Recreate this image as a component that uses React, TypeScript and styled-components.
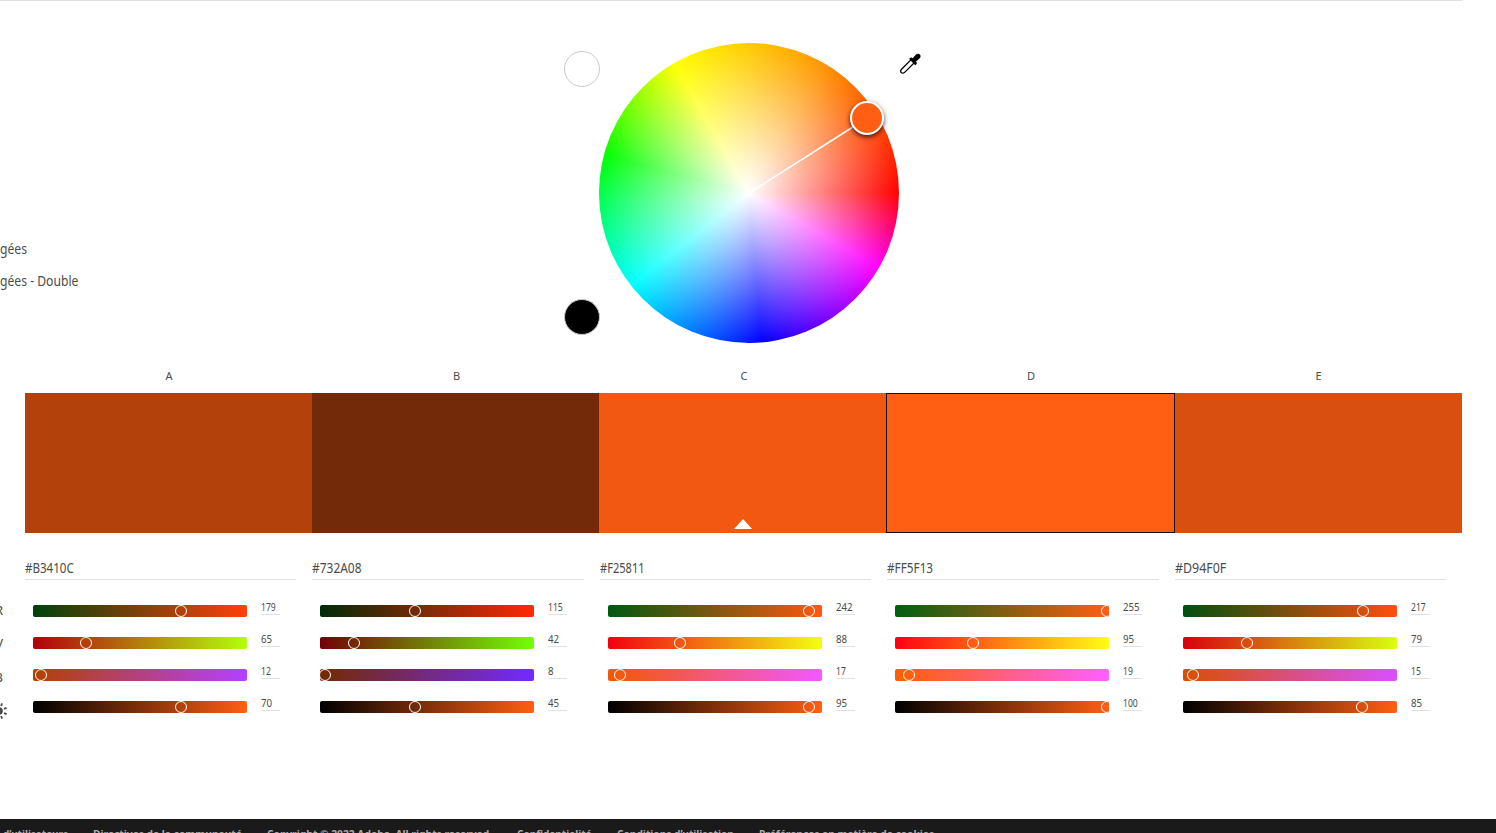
import React from "react";
import styled, { createGlobalStyle } from "styled-components";

const GlobalStyle = createGlobalStyle`
  * { box-sizing: border-box; }
  body {
    margin: 0;
    background: #fff;
    color: #4b4b4b;
    font-family: "Noto Sans", "Open Sans", sans-serif;
    overflow: hidden;
  }
`;

const Page = styled.div`
  display: flex;
  flex-direction: column;
  width: 1496px;
  height: 833px;
  overflow: hidden;
`;

/* Narrows a run of text horizontally, keeping its left edge in place. */
const Condensed = styled.span<{ $scale: number }>`
  display: inline-block;
  white-space: nowrap;
  transform: scaleX(${(p) => p.$scale});
  transform-origin: 0 50%;
`;

const Divider = styled.div`
  flex: none;
  width: 1462px;
  height: 1px;
  background: #e1e1e1;
`;

const Stage = styled.section`
  display: flex;
  flex: none;
  height: 364px;
`;

const HarmonyList = styled.ul`
  flex: none;
  width: 564px;
  margin: 0;
  padding: 232px 0 0;
  list-style: none;
`;

const HarmonyItem = styled.li`
  height: 32px;
  line-height: 32px;
  font-size: 13.5px;
`;

const Chips = styled.div`
  display: flex;
  flex-direction: column;
  justify-content: space-between;
  flex: none;
  width: 36px;
  height: 284px;
  margin: 50px -1px 0 0;
`;

const Chip = styled.div<{ $fill: string }>`
  width: 36px;
  height: 36px;
  border: 1px solid #c9c9c9;
  border-radius: 50%;
  background: ${(p) => p.$fill};
`;

const Wheel = styled.div`
  position: relative;
  flex: none;
  width: 300px;
  height: 300px;
  margin-top: 42px;
  border-radius: 50%;
  background:
    radial-gradient(closest-side, #fff, rgba(255, 255, 255, 0)),
    conic-gradient(
      from 90deg,
      #f00 0deg,
      #f0f 30deg,
      #00f 85deg,
      #0ff 142deg,
      #0f0 195deg,
      #ff0 240deg,
      #ff9500 300deg,
      #f00 360deg
    );
`;

const Spoke = styled.svg`
  position: absolute;
  left: 150px;
  top: 74px;
`;

const Marker = styled.div`
  position: absolute;
  left: 251px;
  top: 58px;
  width: 34px;
  height: 34px;
  border: 2px solid #fff;
  border-radius: 50%;
  background: #ff5f13;
  box-shadow: 0 2px 5px rgba(0, 0, 0, 0.75);
`;

const Dropper = styled.svg`
  flex: none;
  margin: 51px 0 0 0;
`;

const Editor = styled.section`
  display: flex;
  flex: none;
  height: 454px;
`;

const Gutter = styled.div`
  flex: none;
  width: 25px;
  padding-top: 228px;
`;

const ChannelName = styled.div`
  display: flex;
  justify-content: flex-end;
  align-items: center;
  width: 3px;
  height: 33.5px;
  font-size: 13px;
`;

const Palette = styled.div`
  flex: none;
  width: 1437px;
`;

const Swatches = styled.div`
  display: grid;
  grid-template-columns: 287px 287px 287px 289px 287px;
`;

const Letter = styled.div<{ $nudge: number }>`
  height: 28px;
  padding: 2px 0 0 ${(p) => p.$nudge}px;
  line-height: 18px;
  font-size: 11px;
  text-align: center;
`;

const Swatch = styled.div<{ $fill: string; $active: boolean }>`
  display: flex;
  justify-content: center;
  align-items: flex-end;
  height: 140px;
  padding-bottom: 4px;
  background: ${(p) => p.$fill};
  border: ${(p) => (p.$active ? "1px solid #111" : "none")};
`;

const BaseMark = styled.div`
  width: 0;
  height: 0;
  border: 9px solid transparent;
  border-top: 0;
  border-bottom: 10px solid #fff;
`;

const Columns = styled.div`
  display: grid;
  grid-template-columns: repeat(5, 287.4px);
  padding-top: 25px;
`;

const Hex = styled.div`
  width: 271.4px;
  height: 22px;
  margin-bottom: 25px;
  border-bottom: 1px solid #e1e1e1;
  line-height: 20px;
  font-size: 13.5px;
`;

const Channel = styled.div`
  display: flex;
  height: 32px;
  padding-left: 8px;
`;

const Track = styled.div<{ $from: string; $to: string }>`
  position: relative;
  flex: none;
  width: 214px;
  height: 12px;
  border-radius: 2px;
  overflow: hidden;
  background: linear-gradient(to right, ${(p) => p.$from}, ${(p) => p.$to});
`;

const Thumb = styled.div`
  position: absolute;
  top: 0;
  width: 12px;
  height: 12px;
  border: 1px solid #fff;
  border-radius: 50%;
`;

const Value = styled.div`
  width: 19px;
  height: 14px;
  margin: -4px 0 0 14px;
  border-bottom: 1px solid #e1e1e1;
  line-height: 13px;
  font-size: 10px;
`;

const Footer = styled.footer`
  display: flex;
  flex: none;
  height: 40px;
  padding: 6px 0 0 3px;
  background: #1a1a1a;
  color: #a9a9a9;
  font-size: 11px;
  font-weight: 700;
  line-height: 18px;
`;

const FooterLink = styled.span<{ $width: number }>`
  flex: none;
  width: ${(p) => p.$width}px;
`;

type Rgb = [number, number, number];

const colors: { name: string; hex: string; scale: number; rgb: Rgb; light: number }[] = [
  { name: "A", hex: "#B3410C", scale: 0.857, rgb: [179, 65, 12], light: 70 },
  { name: "B", hex: "#732A08", scale: 0.885, rgb: [115, 42, 8], light: 45 },
  { name: "C", hex: "#F25811", scale: 0.82, rgb: [242, 88, 17], light: 95 },
  { name: "D", hex: "#FF5F13", scale: 0.871, rgb: [255, 95, 19], light: 100 },
  { name: "E", hex: "#D94F0F", scale: 0.92, rgb: [217, 79, 15], light: 85 },
];

const links = [
  { text: "d’utilisateurs", width: 90, scale: 0.905 },
  { text: "Directives de la communauté", width: 174, scale: 0.93 },
  { text: "Copyright © 2022 Adobe. All rights reserved.", width: 250, scale: 0.932 },
  { text: "Confidentialité", width: 100, scale: 0.91 },
  { text: "Conditions d’utilisation", width: 142, scale: 0.922 },
  { text: "Préférences en matière de cookies", width: 180, scale: 0.928 },
];

const withChannel = (rgb: Rgb, index: number, value: number) => {
  const next = [...rgb];
  next[index] = value;
  return `rgb(${next.join(",")})`;
};

const Slider = ({ from, to, value, max }: { from: string; to: string; value: number; max: number }) => (
  <Channel>
    <Track $from={from} $to={to}>
      <Thumb style={{ left: (value / max) * 214 - 8 }} />
    </Track>
    <Value>
      <Condensed $scale={String(value).includes("1") ? 0.86 : 0.97}>{value}</Condensed>
    </Value>
  </Channel>
);

const Sun = styled.svg`
  flex: none;
  margin: 2px -6px 0 0;
`;

const SunIcon = () => (
  <Sun width="20" height="20" viewBox="-10 -10 20 20">
    <circle r="3.8" fill="#4b4b4b" />
    {[22.5, 67.5, 112.5, 157.5, 202.5, 247.5, 292.5, 337.5].map((a) => (
      <line key={a} x1="5.4" x2="8.2" y1="0" y2="0" stroke="#4b4b4b" strokeWidth="1.8" transform={`rotate(${a})`} />
    ))}
  </Sun>
);

export default function App() {
  return (
    <>
      <GlobalStyle />
      <Page>
        <Divider />
        <Stage>
          <HarmonyList>
            <HarmonyItem>
              <Condensed $scale={0.9}>gées</Condensed>
            </HarmonyItem>
            <HarmonyItem>
              <Condensed $scale={0.9}>gées - Double</Condensed>
            </HarmonyItem>
          </HarmonyList>
          <Chips>
            <Chip $fill="#fff" />
            <Chip $fill="#000" />
          </Chips>
          <Wheel>
            <Spoke width="120" height="80">
              <line x1="1" y1="75.5" x2="118" y2="1" stroke="#fff" strokeWidth="1.6" />
            </Spoke>
            <Marker />
          </Wheel>
          <Dropper width="24" height="24" viewBox="0 0 24 24">
            <path
              d="M12.4 7.4 2.8 17c-1.2 1.2-1.3 2.8-.5 3.6s2.4.7 3.6-.5l9.6-9.6"
              fill="#fff"
              stroke="#000"
              strokeWidth="1.3"
            />
            <path
              d="M10.8 6.2c.7-.9 1.7-1 2.5-.3l.5.4 2.7-3.3c1.3-1.4 3.3-1.7 4.4-.6s.8 3.1-.6 4.4l-3.3 2.7.4.5c.7.8.6 1.8-.3 2.5l-.9.7-6.1-6.1z"
              fill="#000"
            />
          </Dropper>
        </Stage>
        <Editor>
          <Gutter>
            <ChannelName>R</ChannelName>
            <ChannelName>V</ChannelName>
            <ChannelName>B</ChannelName>
            <ChannelName>
              <SunIcon />
            </ChannelName>
          </Gutter>
          <Palette>
            <Swatches>
              {colors.map((c, i) => (
                <div key={c.name}>
                  <Letter $nudge={[1, 2, 3, 1, 0][i]}>{c.name}</Letter>
                  <Swatch $fill={c.hex} $active={c.name === "D"}>
                    {c.name === "C" && <BaseMark />}
                  </Swatch>
                </div>
              ))}
            </Swatches>
            <Columns>
              {colors.map((c) => (
                <div key={c.name}>
                  <Hex>
                    <Condensed $scale={c.scale}>{c.hex}</Condensed>
                  </Hex>
                  {c.rgb.map((v, i) => (
                    <Slider
                      key={i}
                      from={withChannel(c.rgb, i, 0)}
                      to={withChannel(c.rgb, i, 255)}
                      value={v}
                      max={255}
                    />
                  ))}
                  <Slider from="#000" to="#ff5f13" value={c.light} max={100} />
                </div>
              ))}
            </Columns>
          </Palette>
        </Editor>
        <Footer>
          {links.map((l) => (
            <FooterLink key={l.text} $width={l.width}>
              <Condensed $scale={l.scale}>{l.text}</Condensed>
            </FooterLink>
          ))}
        </Footer>
      </Page>
    </>
  );
}
